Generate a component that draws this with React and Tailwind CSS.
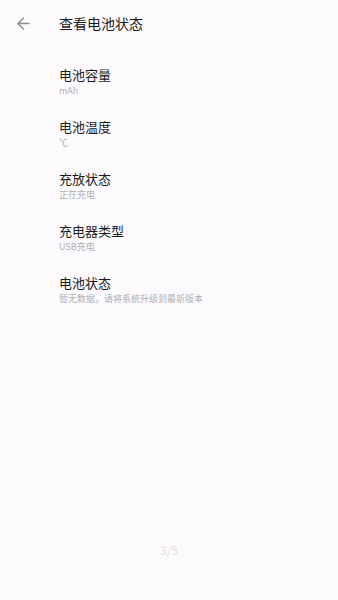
import { ArrowLeft } from 'lucide-react';

const items = [
    ['电池容量', 'mAh'],
    ['电池温度', '℃'],
    ['充放状态', '正在充电'],
    ['充电器类型', 'USB充电'],
    ['电池状态', '暂无数据，请将系统升级到最新版本'],
];

export default function App() {
    return (
        <div className="w-[338px] h-[600px] bg-[#fcfafd] flex flex-col" style={{ fontFamily: '"Noto Sans CJK SC", "Noto Sans", sans-serif' }}>
            {/* Header */}
            <div className="h-[46px] flex items-center">
                <div className="w-[59px] flex items-center pl-[14px]">
                    <ArrowLeft size={19} strokeWidth={1.6} className="text-[#8a8a8a]" />
                </div>
                <span className="text-[14px] text-[#1a1a1a] leading-none">查看电池状态</span>
            </div>

            {/* List */}
            <div className="flex flex-col pl-[59px] pt-[19px]">
                {items.map(([title, sub]) => (
                    <div key={title} className="h-[52px] flex flex-col">
                        <span className="text-[13px] leading-[19px] text-[#1a1a1a]">{title}</span>
                        <span className="text-[9px] leading-[12px] text-[#b0b0b0] mt-[1px]">{sub}</span>
                    </div>
                ))}
            </div>

            <div className="flex-1" />
            <div className="text-center text-[12px] text-[#e2e0e4] pb-[41px]">3/5</div>
        </div>
    );
}
